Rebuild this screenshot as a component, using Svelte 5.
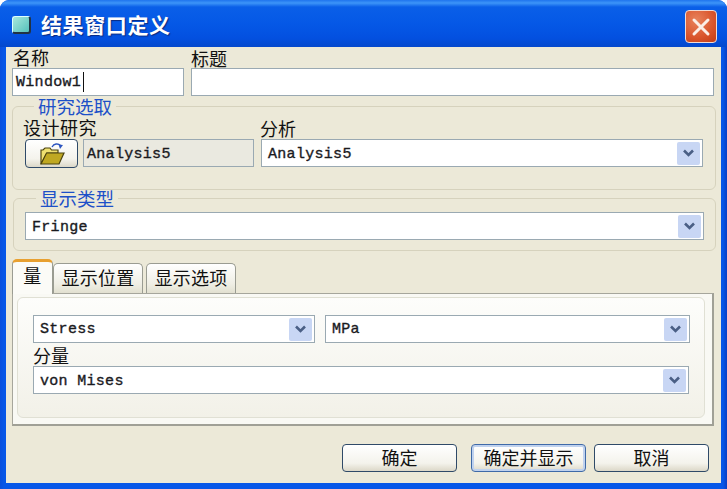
<script lang="ts">
    let activeTab = $state(0);
    const tabs = ['量', '显示位置', '显示选项'];
    const actions = [
        { label: '确定', primary: false },
        { label: '确定并显示', primary: true },
        { label: '取消', primary: false }
    ];
</script>

{#snippet combo(value: string)}
    <div class="combo">
        <span class="value">{value}</span>
        <span class="arrow">
            <svg width="13" height="10" viewBox="0 0 13 10">
                <path d="M2 2.5 L6.5 7 L11 2.5" fill="none" stroke="#4a5f85" stroke-width="2.6" />
            </svg>
        </span>
    </div>
{/snippet}

<div class="window">
    <header class="titlebar">
        <span class="appicon"></span>
        <h1>结果窗口定义</h1>
        <button class="close" aria-label="关闭">
            <svg width="22" height="22" viewBox="0 0 22 22">
                <path d="M4 4 L18 18 M18 4 L4 18" stroke="#fbeee6" stroke-width="3" stroke-linecap="round" />
            </svg>
        </button>
    </header>

    <main class="content">
        <div class="name_row">
            <div>
                <div class="label nudge">名称</div>
                <div class="text_field"><span class="value">Window1</span><i class="caret"></i></div>
            </div>
            <div>
                <div class="label">标题</div>
                <div class="text_field"></div>
            </div>
        </div>

        <fieldset class="first">
            <legend>研究选取</legend>
            <div class="study_row">
                <div>
                    <div class="label shift">设计研究</div>
                    <div class="picker">
                        <button class="btn open" aria-label="打开">
                            <svg width="26" height="24" viewBox="0 0 26 24">
                                <path d="M2 22 V8 H4 L6 6 H11 L12.500 8 H19 V11 H8 L2 22 Z" fill="#efe070" stroke="#4c4410" stroke-width="1.2" />
                                <path d="M2 22 L7.500 11 H25 L20 22 Z" fill="#bfa822" stroke="#4c4410" stroke-width="1.2" />
                                <path d="M13 5 C15 1.500 19 1 21.500 3.500" fill="none" stroke="#2d55c0" stroke-width="1.400" />
                                <path d="M24 3 L21 7 L19.500 2.500 Z" fill="#2d55c0" />
                            </svg>
                        </button>
                        <div class="readonly"><span class="value">Analysis5</span></div>
                    </div>
                </div>
                <div>
                    <div class="label shift1">分析</div>
                    {@render combo('Analysis5')}
                </div>
            </div>
        </fieldset>

        <fieldset class="second">
            <legend>显示类型</legend>
            {@render combo('Fringe')}
        </fieldset>

        <div class="tabs">
            {#each tabs as tab, i}
                <button class="tab" class:active={activeTab === i} onclick={() => (activeTab = i)}>{tab}</button>
            {/each}
        </div>
        <section class="panel">
            <div class="panel_inner">
                <div class="quantity_row">
                    {@render combo('Stress')}
                    {@render combo('MPa')}
                </div>
                <div class="label lift">分量</div>
                {@render combo('von Mises')}
            </div>
        </section>

        <footer class="actions">
            {#each actions as action}
                <button class="btn action" class:primary={action.primary}>{action.label}</button>
            {/each}
        </footer>
    </main>
</div>

<style>
    :global(body) {
        background: #fff;
    }

    .window {
        width: 727px;
        height: 489px;
        box-sizing: border-box;
        display: flex;
        flex-direction: column;
        padding: 0 6px 6px;
        border-radius: 9px 9px 0 0;
        background: linear-gradient(90deg, #0a4fdc, #0757e8 4px, #0757e8 calc(100% - 4px), #0a3fc4);
        font-family: 'Noto Sans CJK SC', 'Liberation Sans', sans-serif;
        font-size: 18px;
        color: #111;
        overflow: hidden;
    }

    .titlebar {
        height: 47px;
        flex: none;
        margin: 0 -6px;
        padding: 0 10px 0 12px;
        display: flex;
        align-items: center;
        background: linear-gradient(180deg, #1f74ee 0, #3d95f8 3px, #0a5fe8 7px, #0558e6 24px, #0350e0 38px, #0448cc 47px);
    }

    .appicon {
        width: 16px;
        height: 15px;
        margin: 3px 0 0;
        border: 1px solid #dff;
        border-right: 2px solid #234;
        border-bottom: 2px solid #234;
        border-radius: 3px;
        background: linear-gradient(135deg, #a8e8dc, #55c0bc);
    }

    h1 {
        margin: 0 0 0 10px;
        font-size: 21px;
        font-weight: 700;
        letter-spacing: 0.6px;
        color: #fff;
        text-shadow: 1px 1px 1px #0a2a80;
    }

    .close {
        margin: 6px 0 0 auto;
        width: 32px;
        height: 33px;
        padding: 0;
        display: flex;
        align-items: center;
        justify-content: center;
        border: 1px solid #f2dcd4;
        border-radius: 4px;
        background: radial-gradient(circle at 35% 30%, #e8835c, #d9542b 60%, #c23c16);
    }

    .content {
        flex: 1;
        min-height: 0;
        padding: 0 7px 0 6px;
        background: #ece9d8;
    }

    .label {
        height: 20px;
        line-height: 20px;
        white-space: nowrap;
    }

    .nudge {
        margin: 0 0 1px 1px;
    }

    .lift {
        line-height: 18px;
    }

    .name_row {
        display: grid;
        grid-template-columns: 172px 1fr;
        gap: 7px;
        align-items: end;
    }

    .text_field,
    .combo,
    .readonly {
        height: 28px;
        box-sizing: border-box;
        display: flex;
        align-items: center;
        border: 1.5px solid #9aa9b2;
        background: #fff;
    }

    .value {
        padding: 1px 0 0 3px;
        font-family: 'Liberation Mono', 'DejaVu Sans Mono', monospace;
        font-size: 15px;
        letter-spacing: 0.3px;
        color: #1a1a1e;
        -webkit-text-stroke: 0.35px #1a1a1e;
    }

    .combo .value {
        padding: 2px 0 0 6px;
    }

    .readonly .value {
        padding-top: 3px;
    }

    .quantity_row .value {
        padding-top: 0;
    }

    .caret {
        width: 1px;
        height: 20px;
        margin-left: 2px;
        background: #111;
    }

    fieldset {
        margin: 0;
        min-width: 0;
        border: 1px solid #d6d2bd;
        border-radius: 6px;
    }

    legend {
        height: 21px;
        line-height: 21px;
        font-size: 18.5px;
        color: #1d50c8;
    }

    .first {
        margin: 0 -2px 0 0;
        padding: 0 12px 21px;
    }

    .first legend {
        margin-left: 9px;
        padding: 0 4px;
    }

    .second {
        margin: -2px -2px 0 1px;
        padding: 3px 11px 10px;
    }

    .second legend {
        margin-left: 11px;
        padding: 0 4px;
    }

    .study_row {
        display: grid;
        grid-template-columns: 229px 442px;
        gap: 7px;
    }

    .shift {
        margin: 0 0 2px -2px;
        letter-spacing: 0.5px;
    }

    .shift1 {
        margin: 1px 0 1px -1px;
    }

    .picker {
        display: flex;
        gap: 5px;
    }

    .btn {
        box-sizing: border-box;
        padding: 0;
        display: flex;
        align-items: center;
        justify-content: center;
        border: 1.5px solid #2f4a68;
        border-radius: 4px;
        background: linear-gradient(180deg, #ffffff, #f4f3ec 70%, #dcd8c8);
        font-family: inherit;
        font-size: 18px;
        color: #111;
    }

    .open {
        width: 53px;
        height: 29px;
        flex: none;
    }

    .readonly {
        flex: 1;
        background: #eae9e0;
    }

    .combo {
        justify-content: space-between;
    }

    .arrow {
        width: 23px;
        height: 23px;
        margin-right: 2px;
        display: flex;
        align-items: center;
        justify-content: center;
        border-radius: 2px;
        background: #c8d6f4;
    }

    .tabs {
        height: 33px;
        margin-top: 9px;
        display: flex;
        align-items: flex-end;
    }

    .tab {
        box-sizing: border-box;
        height: 30px;
        padding: 0 0 3px;
        width: 90px;
        border: 1px solid #9a9c92;
        border-bottom: none;
        border-radius: 5px 5px 0 0;
        background: linear-gradient(180deg, #fff, #efeee4 70%, #e2e0d0);
        font-family: inherit;
        font-size: 18px;
        letter-spacing: 0.3px;
        color: #111;
    }

    .tab:nth-child(3) {
        margin-left: 3px;
    }

    .tab.active {
        width: 41px;
        height: 35px;
        margin-bottom: -1px;
        padding-bottom: 6px;
        z-index: 1;
        border-top: 3px solid #e8a030;
        background: #fbfbf7;
    }

    .panel {
        height: 133px;
        box-sizing: border-box;
        padding: 3px 7px 6px 4px;
        border: 1px solid #a6a69c;
        border-bottom: 2px solid #a0a096;
        border-right: 2px solid #a0a096;
        background: #f9f9f4;
    }

    .panel_inner {
        height: 100%;
        box-sizing: border-box;
        padding: 17px 15px 0;
        border: 1px solid #e0e0d4;
        border-radius: 6px;
        background: linear-gradient(180deg, #fdfdfb, #f2f1e8);
    }

    .quantity_row {
        display: grid;
        grid-template-columns: 282px 365px;
        gap: 10px;
        margin-bottom: 3px;
    }

    .actions {
        margin-top: 18px;
        padding-right: 5px;
        display: flex;
        justify-content: flex-end;
        gap: 8px;
    }

    .action {
        width: 115px;
        height: 28px;
        padding-bottom: 3px;
    }

    .action.primary {
        margin-left: 6px;
        border-color: #3f6aa8;
        box-shadow: inset 0 0 0 2px #c0d2ee;
    }
</style>
